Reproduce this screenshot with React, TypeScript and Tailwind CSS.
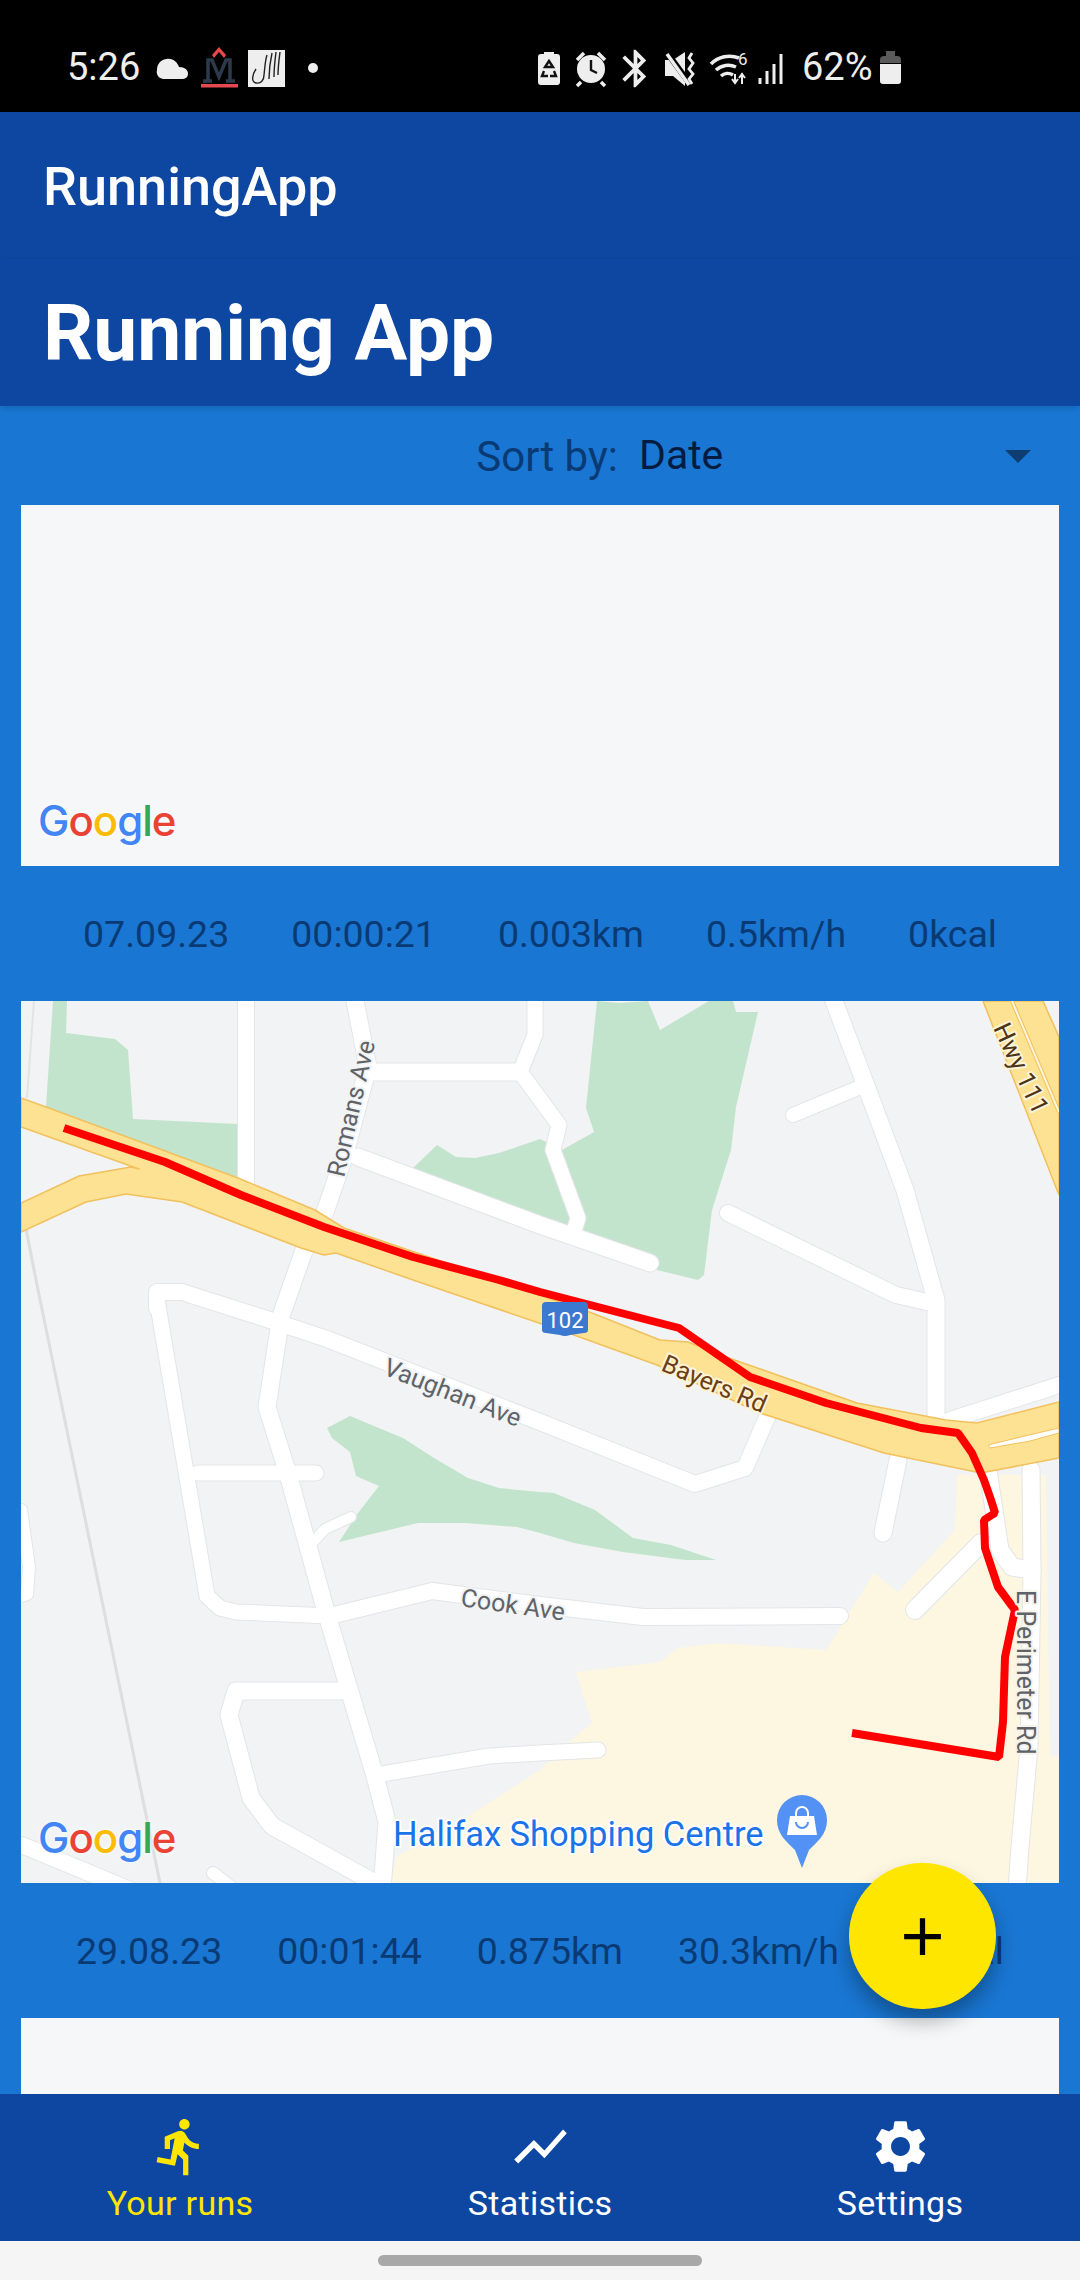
import React from "react";
import { MdDirectionsRun, MdShowChart, MdSettings, MdBluetooth, MdAdd } from "react-icons/md";

const CASED: [string, number][] = [
  ["246,1001 246,1188", 16],
  ["355,1001 368,1067 344,1157 324,1215 303,1253 281,1316 267,1407 288,1474 325,1608 346,1679 375,1776 387,1822 382,1890", 17],
  ["157,1308 157,1292 182,1292 279,1323 327,1339 540,1422 695,1484 745,1468 768,1415", 16],
  ["157,1300 207,1596 220,1608 236,1612 330,1616", 15],
  ["198,1473 316,1473", 15],
  ["312,1543 325,1529 351,1517", 10],
  ["330,1616 432,1591 540,1605 643,1617 840,1616", 16],
  ["341,1691 236,1691 229,1715 251,1798 272,1826 375,1883", 17],
  ["382,1774 489,1756 540,1753 598,1750", 15],
  ["358,1157 540,1225 650,1263", 17],
  ["374,1072 520,1072", 17],
  ["535,1001 535,1035 520,1072 559,1125 553,1150 578,1218 573,1235", 15],
  ["834,1001 865,1083 905,1190 936,1300 936,1425", 17],
  ["858,1088 793,1115", 14],
  ["728,1213 896,1295 927,1302", 16],
  ["950,1420 1059,1385", 16],
  ["898,1460 883,1533", 17],
  ["21,1845 34,1850 130,1890", 16],
  ["213,1873 235,1890", 12],
  ["21,1510 29,1567 27,1594 21,1596", 12],
  ["915,1610 981,1543", 18],
  ["988,1470 1000,1550 1012,1567 1032,1570", 17],
  ["1031,1470 1032,1570 1029,1747 1020,1847 1017,1890", 17],
];

const ROUTE =
  "64,1128 165,1162 241,1195 324,1227 413,1257 499,1280 540,1292 679,1328 750,1377 826,1403 921,1428 958,1433 972,1453 984,1480 991,1500 995,1513 984,1520 985,1548 998,1587 1015,1610 1005,1657 1003,1722 999,1757 852,1733";

function Google() {
  return (
    <div className="absolute left-[17px] bottom-[17px] h-[56px] leading-[56px] text-[42px] font-medium tracking-[-1px] whitespace-nowrap [font-family:Inter,sans-serif] [text-shadow:0_0_4px_#ffffff]">
      <span className="text-[#4285f4]">G</span>
      <span className="text-[#ea4335]">o</span>
      <span className="text-[#fbbc05]">o</span>
      <span className="text-[#4285f4]">g</span>
      <span className="text-[#34a853]">l</span>
      <span className="text-[#ea4335]">e</span>
    </div>
  );
}

function MapLabel({ x, y, angle, size, fill, halo, children }: { x: number; y: number; angle: number; size: number; fill: string; halo: string; children: string }) {
  return (
    <text x={x} y={y} transform={`rotate(${angle} ${x} ${y})`} fontFamily="Roboto" fontSize={size} fill={fill} stroke={halo} strokeWidth="4" paintOrder="stroke" strokeLinejoin="round">
      {children}
    </text>
  );
}

function RouteMap() {
  return (
    <svg viewBox="21 1001 1038 882" className="absolute inset-0 w-full h-full">
      <rect x="21" y="1001" width="1038" height="882" fill="#f1f3f4" />
      <polyline points="34,1001 27,1098" fill="none" stroke="#e2e4e6" strokeWidth="2" />
      <polyline points="21,1203 36,1280 160,1883" fill="none" stroke="#dcdee0" strokeWidth="3" />
      <polygon points="53,1001 67,1001 66,1033 115,1039 128,1050 133,1119 238,1124 238,1178 46,1107" fill="#c3e4cc" />
      <polygon points="411,1170 437,1145 456,1157 475,1158 499,1153 540,1139 562,1150 594,1132 586,1108 597,1001 619,1003 648,1001 660,1030 709,1001 733,1001 736,1012 758,1012 736,1107 731,1150 712,1210 704,1275 698,1280 657,1270 600,1245" fill="#c3e4cc" />
      <polygon points="327,1428 350,1416 403,1438 434,1458 468,1478 499,1488 540,1492 554,1493 595,1510 633,1538 671,1545 716,1560 685,1560 623,1552 574,1543 540,1533 517,1527 465,1523 418,1523 339,1542 358,1513 379,1486 356,1476 350,1452 332,1438" fill="#c3e4cc" />
      <polygon points="957,1475 1046,1475 1050,1755 1059,1757 1059,1883 391,1883 396,1857 465,1818 540,1770 569,1742 592,1723 576,1672 660,1662 678,1648 719,1643 826,1650 874,1573 898,1592 955,1530" fill="#fdf6e0" />
      {CASED.map(([p, w], i) => (
        <polyline key={i} points={p} fill="none" stroke="#e3e5e8" strokeWidth={w + 2} strokeLinecap="round" strokeLinejoin="round" />
      ))}
      {CASED.map(([p, w], i) => (
        <polyline key={i} points={p} fill="none" stroke="#ffffff" strokeWidth={w} strokeLinecap="round" strokeLinejoin="round" />
      ))}
      <polygon points="21,1098 46,1107 238,1178 315,1210 344,1228 458,1267 592,1313 660,1340 688,1342 726,1357 857,1403 946,1420 977,1423 1059,1402 1059,1458 981,1473 884,1453 760,1413 657,1365 574,1335 413,1280 336,1253 324,1255 301,1248 182,1202 126,1194 86,1202 21,1232 21,1203 79,1176 131,1167 139,1169 21,1127" fill="#fde293" stroke="#f2c05c" strokeWidth="1.5" strokeLinejoin="round" />
      <polygon points="988,1445 1029,1435 1059,1428 1059,1433 1030,1441 990,1448" fill="#ffffff" stroke="#f2c05c" strokeWidth="1" />
      <polygon points="983,1001 1043,1001 1059,1037 1059,1195" fill="#fde293" stroke="#f2c05c" strokeWidth="1.5" />
      <polyline points="1012,1001 1059,1112" fill="none" stroke="#f2c05c" strokeWidth="4" />
      <polyline points="1012,1001 1059,1112" fill="none" stroke="#fff7dd" strokeWidth="2" />
      <polyline points={ROUTE} fill="none" stroke="#ff0000" strokeWidth="8" strokeLinejoin="bevel" />
      <MapLabel x={344} y={1178} angle={-77} size={25} fill="#5f6368" halo="#f1f3f4">Romans Ave</MapLabel>
      <MapLabel x={382} y={1374} angle={21.5} size={25} fill="#5f6368" halo="#f1f3f4">Vaughan Ave</MapLabel>
      <MapLabel x={460} y={1606} angle={8} size={25} fill="#5f6368" halo="#f1f3f4">Cook Ave</MapLabel>
      <MapLabel x={660} y={1370} angle={23} size={25} fill="#6b3f16" halo="#fff3d6">Bayers Rd</MapLabel>
      <MapLabel x={993} y={1028} angle={65} size={25} fill="#4b3418" halo="#fff3d6">Hwy 111</MapLabel>
      <MapLabel x={1017} y={1590} angle={90} size={25} fill="#5f6368" halo="#f5f3ea">E Perimeter Rd</MapLabel>
      <MapLabel x={393} y={1846} angle={0} size={34.5} fill="#1a73e8" halo="#ffffff">Halifax Shopping Centre</MapLabel>
      <path d="M546 1302h38q4 0 4 4v24q0 3-4 3l-14 2q-5 2-10 0l-14-2q-4 0-4-3v-24q0-4 4-4z" fill="#3b78d0" />
      <text x="565" y="1328" textAnchor="middle" fontFamily="Roboto" fontSize="22" fill="#ffffff">102</text>
      <path d="M802 1795a25 25 0 0 1 25 25c0 14-9 21-18 30l-7 18-7-18c-9-9-18-16-18-30a25 25 0 0 1 25-25z" fill="#5491f5" />
      <path d="M790 1816h5v-3a7 7 0 0 1 14 0v3h5l3 19h-30z" fill="#ffffff" />
      <path d="M797 1816v-3a5 5 0 0 1 10 0v3z" fill="#5491f5" />
      <path d="M796 1822a6 6 0 0 0 12 0" fill="none" stroke="#5491f5" strokeWidth="2" />
    </svg>
  );
}

function Stats({ items }: { items: string[] }) {
  return (
    <div className="h-[135px] shrink-0 flex items-center justify-evenly pt-[2px] text-[37.5px] text-[#0a3a74]">
      {items.map((t) => (
        <span key={t}>{t}</span>
      ))}
    </div>
  );
}

function StatusIcons() {
  return (
    <div className="absolute inset-0">
      <svg width="1080" height="112" viewBox="0 0 1080 112" className="absolute left-0 top-0">
        {/* cloud */}
        <path d="M164 79a7 7 0 0 1-7-9c0-6 4-11 10-11 6-1 10 3 12 8 6 0 9 3 9 7a5 5 0 0 1-5 5z" fill="#eeeeee" />
        {/* M logo */}
        <path d="M212 55l7-8 7 8-2 3-5-6-5 6z" fill="#e8474c" />
        <path d="M208 81V60h4l7 17 7-17h4v21M203 81h9M226 81h9" fill="none" stroke="#2d3a4c" strokeWidth="3.5" />
        <rect x="201" y="84" width="37" height="3.5" fill="#e24a50" />
        {/* calligraphy box */}
        <rect x="248" y="50" width="37" height="37" fill="#eeeeee" />
        <path d="M256 69c-4 6-5 13 0 14s8-3 8-8c1-8 1-14 3-20M272 53c-2 9-3 17-3 26M276 52c-1 8-2 16-2 25M280 52c-1 8-2 15-2 23" fill="none" stroke="#222222" strokeWidth="1.4" />
        <circle cx="313" cy="68" r="5" fill="#eeeeee" />
        {/* battery saver */}
        <path d="M544 54v-2h10v2h3a3 3 0 0 1 3 3v25a3 3 0 0 1-3 3h-16a3 3 0 0 1-3-3V57a3 3 0 0 1 3-3z" fill="#eeeeee" />
        <path d="M549 61l-4 6h8zM544 71l-2 5h6M554 71l2 5h-6" fill="none" stroke="#111111" strokeWidth="2.4" />
        {/* alarm */}
        <circle cx="591" cy="69" r="14" fill="#eeeeee" />
        <path d="M591 60v10l6 3" fill="none" stroke="#111111" strokeWidth="2.4" />
        <path d="M577 60l7-7M605 60l-7-7M581 82l-4 4M601 82l4 4" fill="none" stroke="#eeeeee" strokeWidth="3.5" />
        {/* muted with vibration */}
        <path d="M665 60h8l12 -8v34l-12-10h-8z" fill="#eeeeee" />
        <path d="M668 54l22 30" stroke="#000000" strokeWidth="6" />
        <path d="M667 54l22 31" stroke="#eeeeee" strokeWidth="3.5" />
        <path d="M692 53l-3 5 4 5-4 6 4 5-4 5 3 5" fill="none" stroke="#eeeeee" strokeWidth="2.8" />
        {/* wifi */}
        <path d="M711 64a26 26 0 0 1 28-6M716 70a18 18 0 0 1 20-3M721 76a10 10 0 0 1 12-1" fill="none" stroke="#eeeeee" strokeWidth="3.5" />
        <path d="M735 74v9M732 79l3 4 3-4M742 84v-10M739 78l3-4 3 4" fill="none" stroke="#eeeeee" strokeWidth="2" />
        <text x="738" y="65" fontFamily="Roboto" fontSize="17" fill="#eeeeee">6</text>
        {/* signal */}
        <path d="M760 84v-6M767 84v-13M774 84v-20M781 84v-30" stroke="#eeeeee" strokeWidth="3" />
        {/* battery */}
        <path d="M886 56v-5h9v5h2a4 4 0 0 1 4 4v3h-21v-3a4 4 0 0 1 4-4z" fill="#5a5a5a" />
        <path d="M880 64h21v17a3 3 0 0 1-3 3h-15a3 3 0 0 1-3-3z" fill="#eeeeee" />
      </svg>
      <div className="absolute left-[622px] top-[46px] text-[#eeeeee]">
        <MdBluetooth size={45} className="-ml-[9px]" />
      </div>
      <span className="absolute left-[67px] top-[45px] text-[38px] leading-[44px] text-[#eeeeee]">5:26</span>
      <span className="absolute left-[802px] top-[45px] text-[38px] leading-[44px] text-[#eeeeee]">62%</span>
    </div>
  );
}

function NavItem({ icon, label, active }: { icon: React.ReactNode; label: string; active?: boolean }) {
  return (
    <div className={`flex-1 flex flex-col items-center pt-[21px] ${active ? "text-[#ffe600]" : "text-white"}`}>
      {icon}
      <span className="text-[34px] leading-[40px] mt-[5px] tracking-[0.3px]">{label}</span>
    </div>
  );
}

export default function App() {
  return (
    <div className="relative w-[1080px] h-[2280px] overflow-hidden flex flex-col bg-[#1976d2] [font-family:Roboto,sans-serif]">
      <div className="relative h-[112px] bg-black shrink-0">
        <StatusIcons />
      </div>
      <div className="h-[147px] shrink-0 bg-[#0d47a1] flex items-center pl-[43px] pt-[2px] text-[54px] font-medium text-white shadow-[0_2px_5px_rgba(0,0,0,0.15)] z-10">
        RunningApp
      </div>
      <div className="h-[147px] shrink-0 bg-[#0d47a1] flex items-center pl-[43px] pt-[2px] text-[78.5px] font-bold text-white shadow-[0_2px_6px_rgba(0,0,0,0.15)] z-10">
        Running App
      </div>
      <div className="flex-1 min-h-0 overflow-hidden px-[21px] flex flex-col">
        <div className="h-[99px] shrink-0 flex items-center text-[42px] pt-[1px]">
          <span className="w-[597px] text-right text-[#0a3a74]">Sort by:</span>
          <div className="flex-1 flex items-center justify-between pl-[21px] pr-[28px]">
            <span className="text-[41px] text-[#041c40]">Date</span>
            <span className="w-0 h-0 border-l-[13.5px] border-r-[13.5px] border-t-[13px] border-l-transparent border-r-transparent border-t-[#0e3d72]" />
          </div>
        </div>
        <div className="relative h-[361px] shrink-0 bg-[#f5f7f9]">
          <Google />
        </div>
        <Stats items={["07.09.23", "00:00:21", "0.003km", "0.5km/h", "0kcal"]} />
        <div className="relative h-[882px] shrink-0">
          <RouteMap />
          <Google />
        </div>
        <Stats items={["29.08.23", "00:01:44", "0.875km", "30.3km/h", "61kcal"]} />
        <div className="h-[200px] shrink-0 bg-[#f5f7f9]" />
      </div>
      <div className="h-[147px] shrink-0 bg-[#0d47a1] flex z-10">
        <NavItem active icon={<MdDirectionsRun size={63} />} label="Your runs" />
        <NavItem icon={<MdShowChart size={63} />} label="Statistics" />
        <NavItem icon={<MdSettings size={63} />} label="Settings" />
      </div>
      <div className="h-[39px] shrink-0 bg-[#f5f5f5] flex items-center justify-center z-10">
        <div className="w-[324px] h-[11px] rounded-full bg-[#a8a8a8]" />
      </div>
      <div className="absolute left-[849px] top-[1863px] w-[147px] h-[146px] rounded-full bg-[#ffe600] flex items-center justify-center text-black shadow-[0_12px_20px_rgba(0,0,0,0.3)]">
        <MdAdd size={63} />
      </div>
    </div>
  );
}
